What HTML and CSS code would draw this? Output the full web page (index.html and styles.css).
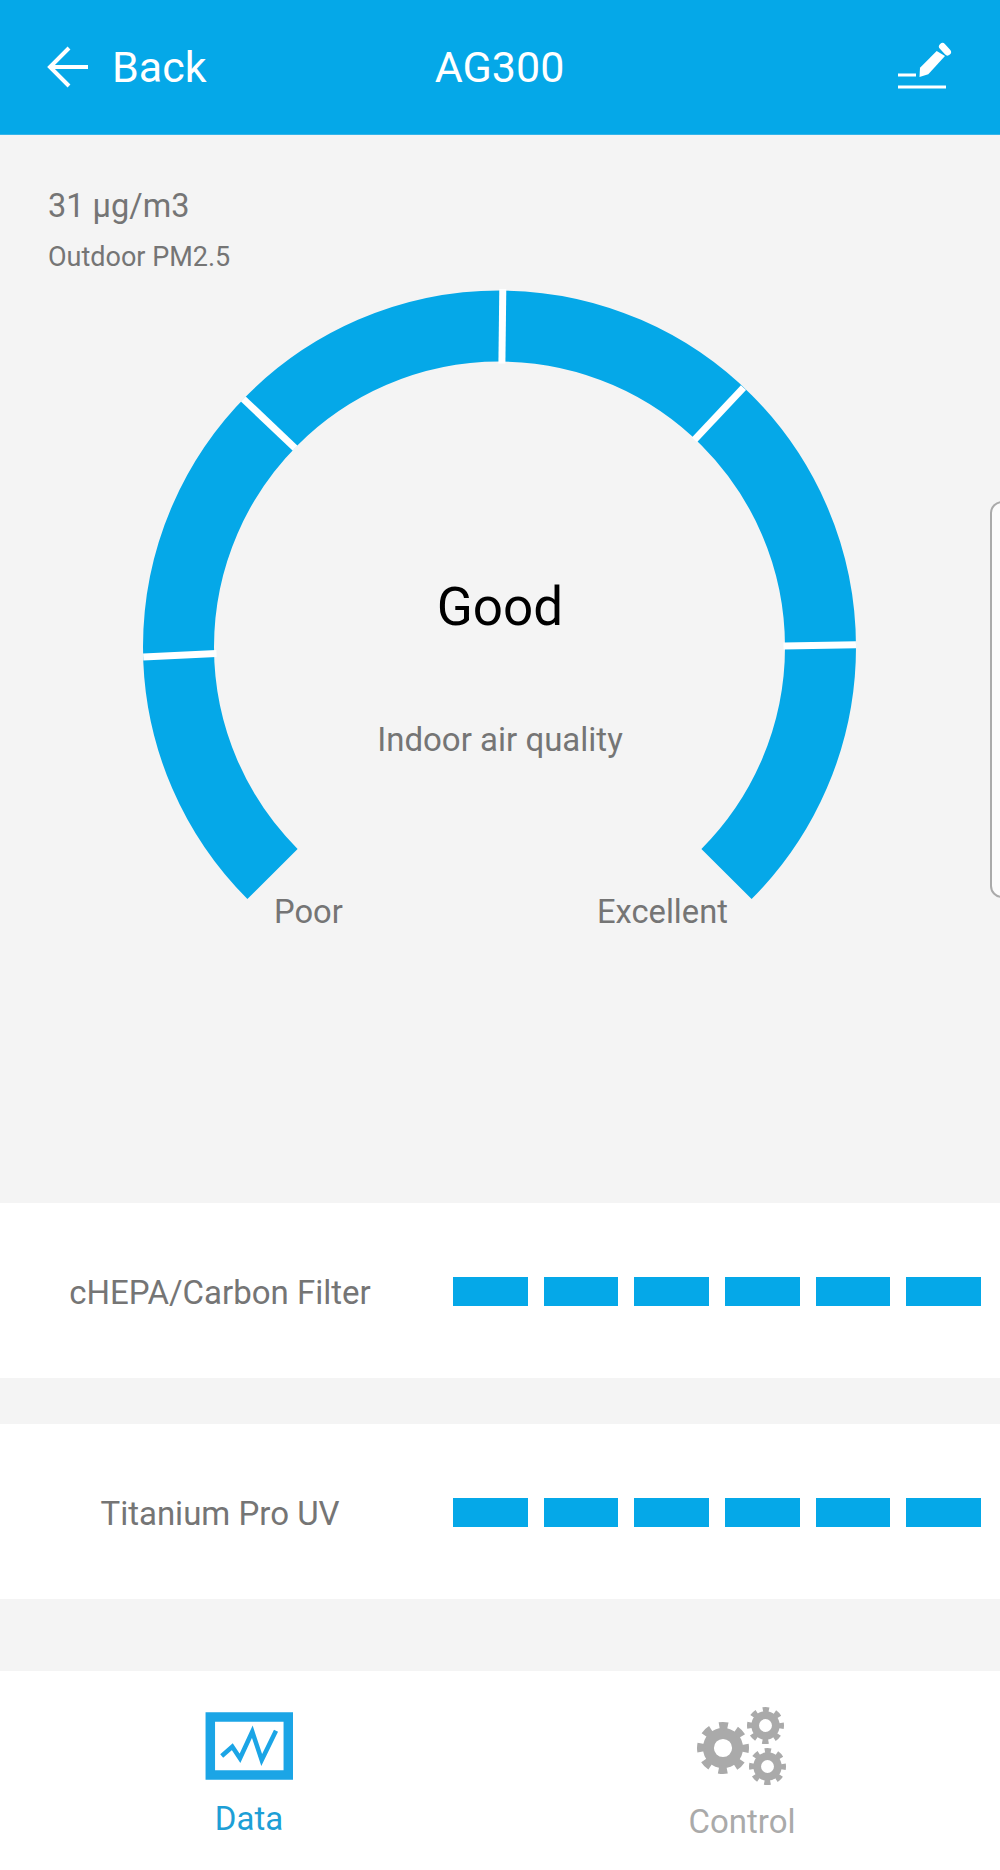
FILE: index.html
```html
<!DOCTYPE html>
<html lang="en">
<head>
  <meta charset="UTF-8">
  <title>AG300</title>
  <link rel="stylesheet" href="styles.css">
</head>
<body>
  <svg class="defs" width="0" height="0">
    <symbol id="gear" viewBox="-50 -50 100 100">
      <circle r="28" fill="none" stroke="#aaa" stroke-width="21"/>
      <circle r="42" fill="none" stroke="#aaa" stroke-width="16" pathLength="16" stroke-dasharray="1" stroke-dashoffset="0.5"/>
    </symbol>
  </svg>

  <header class="topbar">
    <div class="back">
      <svg class="back-icon" viewBox="0 0 48 48" width="48" height="48">
        <path d="M3 24H41M22 5L3 24L22 43" fill="none" stroke="#fff" stroke-width="4"/>
      </svg>
      <span>Back</span>
    </div>
    <h1 class="title">AG300</h1>
    <svg class="edit-icon" viewBox="890 40 64 52" width="64" height="52">
      <path d="M919.5 76L920 66.7L936.7 50L945 55L928.3 73.3Z" fill="#fff"/>
      <path d="M942.5 45.5L947.5 51" stroke="#fff" stroke-width="7" stroke-linecap="round"/>
      <path d="M898 74H916M898 86H946" stroke="#fff" stroke-width="3"/>
    </svg>
  </header>

  <main class="content">
    <section class="summary">
      <div class="outdoor-value">31 µg/m3</div>
      <div class="outdoor-label">Outdoor PM2.5</div>

      <div class="gauge">
        <svg class="gauge-arc" viewBox="140 288 720 620" width="720" height="620">
          <path d="M272.5 875A321 321 0 1 1 726.5 875" fill="none" stroke="#05a8e8" stroke-width="71"/>
          <g stroke="#fff" stroke-width="7">
            <path d="M216.5 654.6L143.2 658"/>
            <path d="M295.2 449.2L243.3 400"/>
            <path d="M501.9 364.5L502.8 290"/>
            <path d="M694.4 440.8L743.5 388.6"/>
            <path d="M783.5 647L856 645.7"/>
          </g>
        </svg>
        <div class="gauge-text">
          <div class="gauge-status">Good</div>
          <div class="gauge-caption">Indoor air quality</div>
        </div>
        <span class="gauge-end gauge-poor">Poor</span>
        <span class="gauge-end gauge-excellent">Excellent</span>
      </div>
    </section>

    <div class="filter-row">
      <div class="filter-name">cHEPA/Carbon Filter</div>
      <div class="filter-bars">
        <i></i><i></i><i></i><i></i><i></i><i></i>
      </div>
    </div>
    <div class="filter-row">
      <div class="filter-name">Titanium Pro UV</div>
      <div class="filter-bars">
        <i></i><i></i><i></i><i></i><i></i><i></i>
      </div>
    </div>

    <div class="side-handle"></div>
  </main>

  <nav class="tabs">
    <div class="tab tab-data">
      <svg viewBox="205 1712 88 68" width="88" height="68">
        <rect x="210.3" y="1717" width="78" height="58" fill="#fff" stroke="#1ba5e6" stroke-width="9.5"/>
        <path d="M221.7 1756L232.3 1746.7L240 1758.3L252.3 1731.7L261.7 1760L276 1730.7" fill="none" stroke="#1ba5e6" stroke-width="4.5"/>
      </svg>
      <span>Data</span>
    </div>
    <div class="tab tab-control">
      <svg viewBox="695 1705 96 84" width="96" height="84">
        <use href="#gear" x="698" y="1722" width="52" height="52"/>
        <use href="#gear" x="748" y="1707" width="37" height="37"/>
        <use href="#gear" x="750" y="1748" width="37" height="37"/>
      </svg>
      <span>Control</span>
    </div>
  </nav>
</body>
</html>
```

FILE: styles.css
```css
* {
  box-sizing: border-box;
}
body {
  margin: 0;
  width: 1000px;
  height: 1870px;
  display: flex;
  flex-direction: column;
  background-color: #f4f4f4;
  font-family: Roboto, "Liberation Sans", sans-serif;
  color: #757575;
}
.defs {
  position: absolute;
}

/* top bar */
.topbar {
  height: 135px;
  padding: 0 48px 0 47px;
  display: grid;
  grid-template-columns: 1fr auto 1fr;
  align-items: center;
  background-color: #05a8e8;
  color: #fff;
  border-bottom: 1px solid #35b5ea;
}
.back {
  display: flex;
  align-items: center;
  gap: 17px;
  font-size: 43px;
}
.back-icon {
  display: block;
}
.title {
  margin: 0;
  font-size: 43px;
  font-weight: 400;
}
.edit-icon {
  justify-self: end;
  margin-right: -2px;
}

/* gauge */
.content {
  position: relative;
  flex: 1;
}
.summary {
  height: 1068px;
  padding: 51px 0 0 48px;
}
.outdoor-value {
  font-size: 32.5px;
  line-height: 40px;
}
.outdoor-label {
  margin-top: 15px;
  font-size: 27px;
  line-height: 32px;
}
.gauge {
  position: relative;
  width: 720px;
  height: 620px;
  margin: 14px 0 0 92px;
}
.gauge-arc {
  display: block;
}
.gauge-text {
  position: absolute;
  top: 290px;
  left: 0;
  width: 720px;
  display: flex;
  flex-direction: column;
  align-items: center;
}
.gauge-status {
  font-size: 53px;
  line-height: 60px;
  color: #000;
}
.gauge-caption {
  margin-top: 83px;
  font-size: 33px;
  line-height: 40px;
}
.gauge-end {
  position: absolute;
  top: 605px;
  font-size: 32.7px;
  line-height: 40px;
}
.gauge-poor {
  left: 134px;
}
.gauge-excellent {
  left: 457px;
}

/* filter rows */
.filter-row {
  height: 175px;
  margin-bottom: 46px;
  display: flex;
  align-items: center;
  background-color: #fff;
}
.filter-name {
  width: 440px;
  padding-top: 4px;
  font-size: 33px;
  text-align: center;
}
.filter-bars {
  margin: 2px 0 0 13px;
  display: flex;
  gap: 16.2px;
}
.filter-bars i {
  display: block;
  width: 74.5px;
  height: 29px;
  background-color: #05a8e8;
}

.side-handle {
  position: absolute;
  top: 366px;
  left: 990px;
  width: 30px;
  height: 397px;
  background-color: #fbfbfb;
  border: 2px solid #aaa;
  border-radius: 12px;
}

/* bottom tabs */
.tabs {
  height: 199px;
  display: grid;
  grid-template-columns: 498px 488px;
  background-color: #fff;
}
.tab {
  display: flex;
  flex-direction: column;
  align-items: center;
  font-size: 33px;
  line-height: 40px;
}
.tab svg {
  display: block;
}
.tab-data {
  padding-top: 41px;
  color: #1d9fd6;
}
.tab-data span {
  margin-top: 19px;
}
.tab-control {
  padding-top: 34px;
  color: #aaa;
}
.tab-control span {
  margin-top: 13px;
}
```
